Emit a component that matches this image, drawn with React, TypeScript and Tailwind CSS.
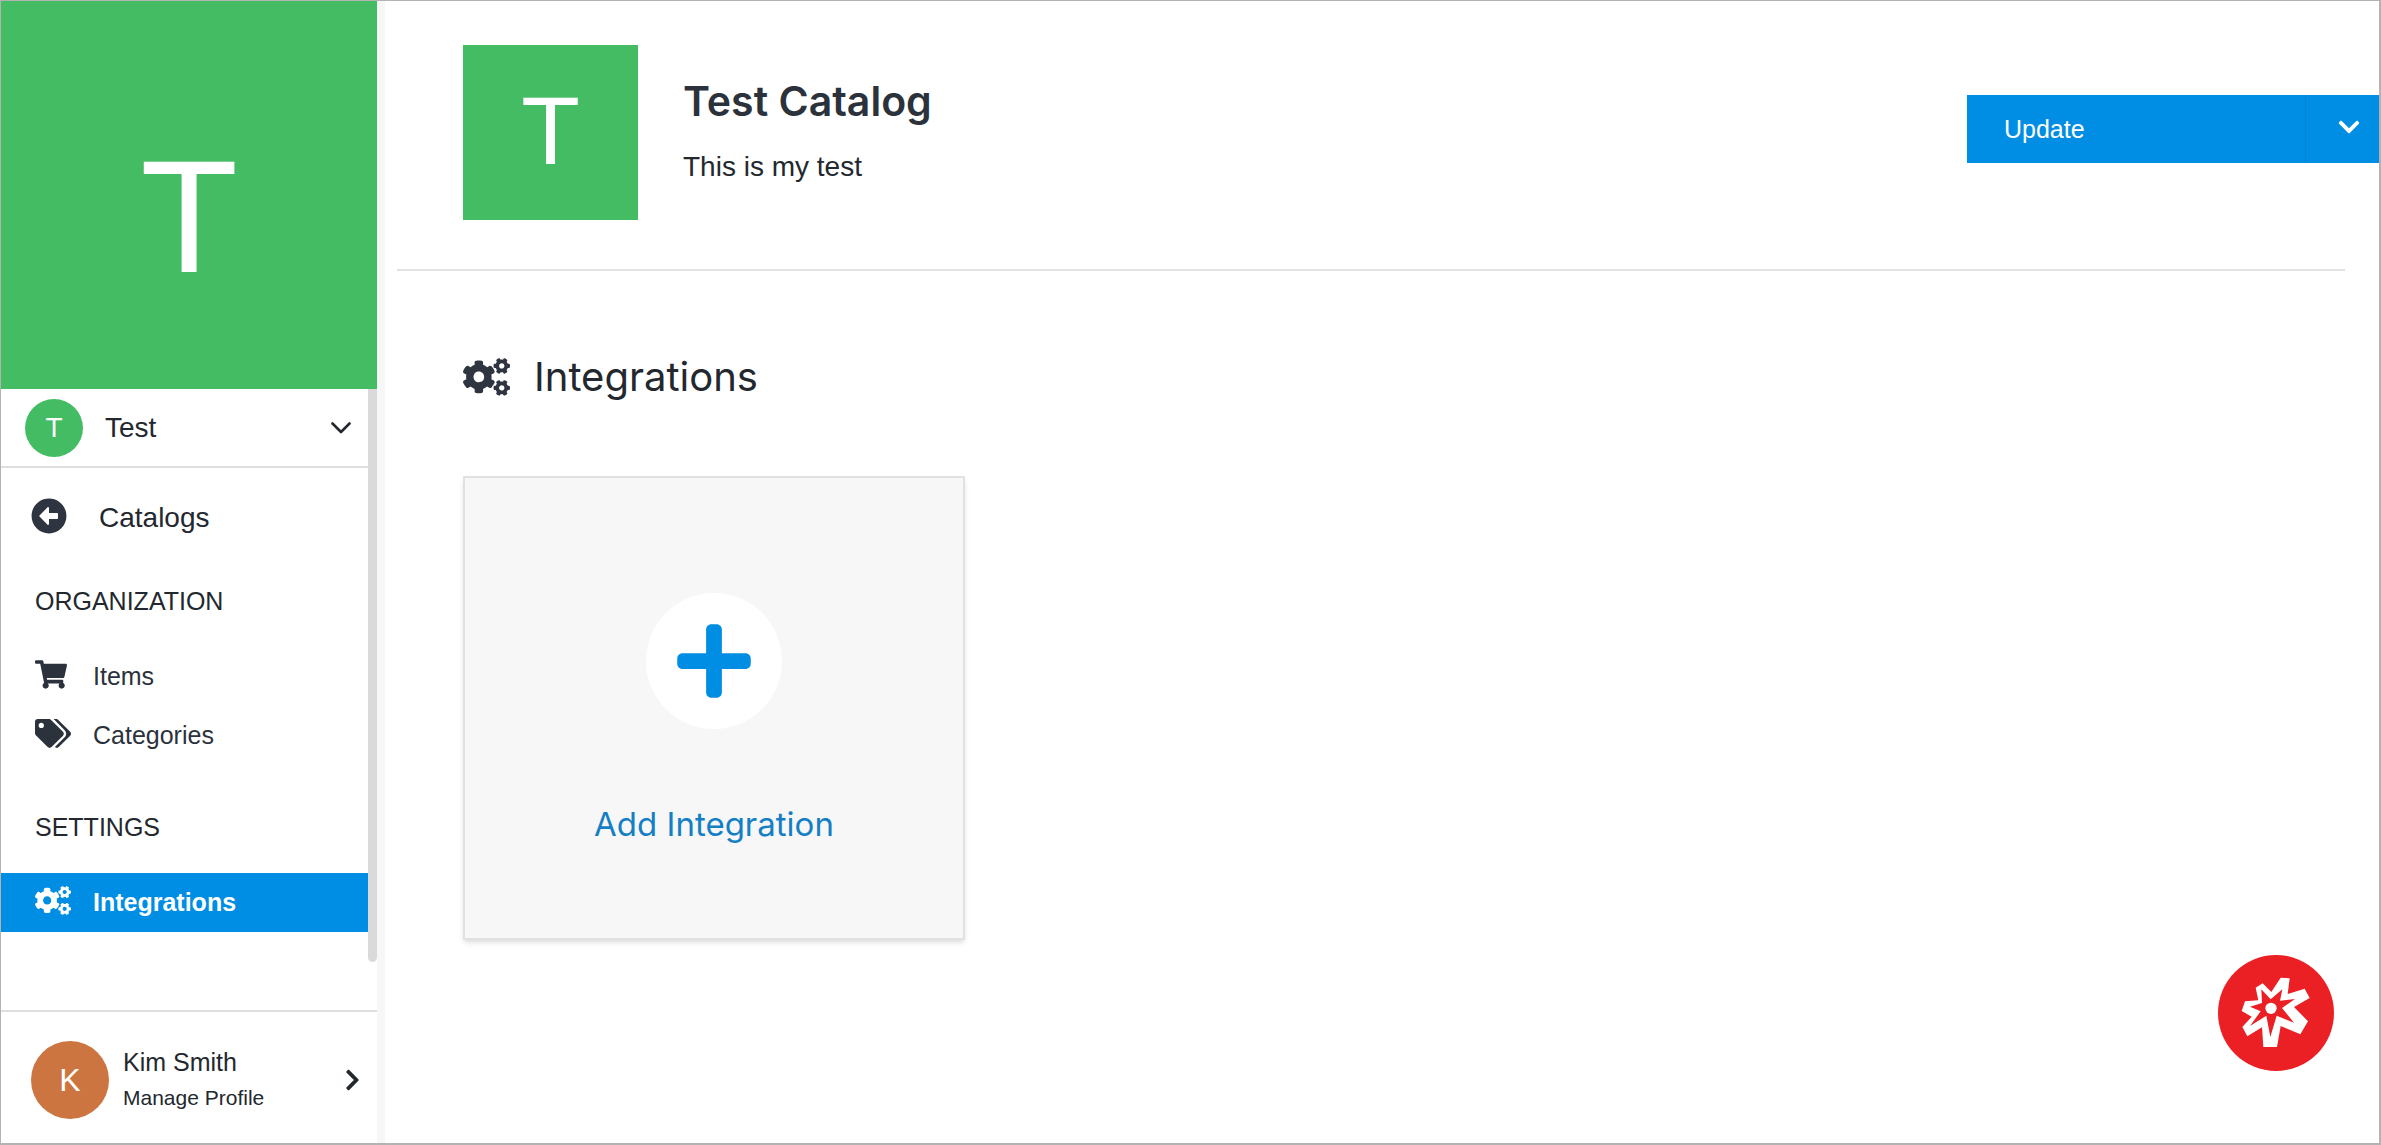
import React from "react";
import { FaArrowAltCircleLeft, FaChevronDown, FaChevronRight, FaCogs, FaPlus, FaShoppingCart, FaTags } from "react-icons/fa";

function NavLink({ icon, label, active = false }: { icon: React.ReactNode; label: string; active?: boolean }) {
  return (
    <a
      href="#"
      aria-current={active ? "page" : undefined}
      className={
        active
          ? "flex h-[59px] items-center bg-[#008de4] pl-[34px] text-[25px] font-bold text-white"
          : "flex h-[59px] items-center pl-[34px] text-[25px] text-[#2b323c]"
      }
    >
      <span className="flex w-[58px] pb-1">{icon}</span>
      {label}
    </a>
  );
}

function Sidebar() {
  return (
    <aside className="flex w-[384px] shrink-0 border-r-8 border-[#f7f7f7]">
      <div className="flex min-w-0 grow flex-col">
        <div className="flex h-[388px] shrink-0 items-center justify-center bg-[#43bc63] pt-11 text-[160px] leading-none text-white">T</div>
        <div className="flex grow">
          <div className="min-w-0 grow">
            <button type="button" className="flex h-[79px] w-full items-center border-b-2 border-[#dedfe1] pr-[17px] pl-6 text-[28px]">
              <span className="flex size-[58px] items-center justify-center rounded-full bg-[#43bc63] text-white">T</span>
              <span className="ml-[22px] grow text-left">Test</span>
              <svg viewBox="0 0 20 12" className="h-3 w-5" fill="none" stroke="currentColor" strokeWidth="2.6" strokeLinecap="round" strokeLinejoin="round" aria-hidden="true">
                <path d="M1.5 1.5 10 10l8.500-8.500" />
              </svg>
            </button>
            <nav>
              <a href="#" className="mt-5 flex h-[60px] items-center pl-[30px] text-[28px]">
                <FaArrowAltCircleLeft className="mr-8 mb-1 size-9 text-[#2f3540]" />
                Catalogs
              </a>
              <h2 className="mt-[35px] pl-[34px] text-[25px] leading-9">ORGANIZATION</h2>
              <div className="mt-7">
                <NavLink icon={<FaShoppingCart className="h-[29px] w-8" />} label="Items" />
                <NavLink icon={<FaTags className="h-[29px] w-9" />} label="Categories" />
              </div>
              <h2 className="mt-11 pl-[34px] text-[25px] leading-9">SETTINGS</h2>
              <div className="mt-7">
                <NavLink icon={<FaCogs className="h-[29px] w-9" />} label="Integrations" active />
              </div>
            </nav>
          </div>
          <div className="h-[573px] w-[9px] shrink-0 rounded-b-full bg-[#dadada]" />
        </div>
        <button type="button" className="flex h-[133px] shrink-0 items-center border-t-2 border-[#dedede] pt-1 pr-[17px] pl-[30px] text-left">
          <span className="flex size-[78px] shrink-0 items-center justify-center rounded-full bg-[#cd7541] text-[32px] text-white">K</span>
          <span className="ml-[14px] flex grow flex-col">
            <span className="text-[25px] leading-9">Kim Smith</span>
            <span className="text-[21px] leading-9">Manage Profile</span>
          </span>
          <FaChevronRight className="h-6 w-[15px]" />
        </button>
      </div>
    </aside>
  );
}

function StarMark() {
  return (
    <svg viewBox="0 0 348 348" className="size-full" aria-hidden="true">
      <path
        fill="#fff"
        d="M188 68 215 70 209 117 260 101 275 129 228 156 270 199 247 238 188 213 177 276H136L132 217 88 244 73 216 101 185 71 168 81 139 121 136 113 98 134 85 160 111Z"
      />
      <path fill="#eb2024" d="M193 103 186 137 231 132 192 159 228 203 176 182 157 246 145 182 96 213 128 169 96 155 132 144 130 103 158 133Z" />
      <circle cx="159" cy="160" r="17" fill="#fff" />
    </svg>
  );
}

export default function App() {
  return (
    <div className="flex min-h-screen border border-r-2 border-b-2 border-[#b3b3b3] bg-white font-['Liberation_Sans',Arial,sans-serif] text-[#23282f]">
      <Sidebar />
      <main className="min-w-0 grow">
        <header className="ml-3 mr-[34px] border-b-2 border-[#e2e2e2]">
          <div className="-mr-[34px] flex h-[268px] items-start pt-11 pl-[66px]">
            <div className="flex size-[175px] shrink-0 items-center justify-center bg-[#43bc63] pb-1 text-[96px] leading-none text-white">T</div>
            <div className="ml-[45px] grow pt-7">
              <h1 className="font-['Inter',sans-serif] text-[41px] leading-[56px] font-semibold text-[#2b323c]">Test Catalog</h1>
              <p className="mt-5 text-[28px] leading-9">This is my test</p>
            </div>
            <div className="mt-[50px] flex h-[68px] w-[412px] bg-[#008de4] text-white">
              <button type="button" className="grow pt-px pl-[37px] text-left text-[25px]">Update</button>
              <button type="button" aria-label="More update options" className="flex w-[74px] items-center justify-center border-l border-[#0083d6] pl-3 pb-1">
                <FaChevronDown className="size-6" />
              </button>
            </div>
          </div>
        </header>
        <section className="pt-[78px] pl-[78px]">
          <h2 className="flex h-14 items-center font-['Inter',sans-serif] text-[40px] font-normal">
            <FaCogs className="mr-6 h-[38px] w-[47px] text-[#2f3540]" />
            Integrations
          </h2>
          <button type="button" className="mt-[71px] flex h-[464px] w-[502px] flex-col items-center border-2 border-[#e0e1e3] bg-[#f7f7f7] pt-[115px] shadow-md">
            <span className="flex size-[136px] items-center justify-center rounded-full bg-white text-[#008de4]">
              <FaPlus className="size-[84px]" />
            </span>
            <span className="mt-[75px] font-['Inter',sans-serif] text-[33px] leading-10 text-[#147fc4]">Add Integration</span>
          </button>
        </section>
      </main>
      <button type="button" aria-label="Open help" className="fixed right-[47px] bottom-[74px] size-[116px] rounded-full bg-[#eb2024]">
        <StarMark />
      </button>
    </div>
  );
}
